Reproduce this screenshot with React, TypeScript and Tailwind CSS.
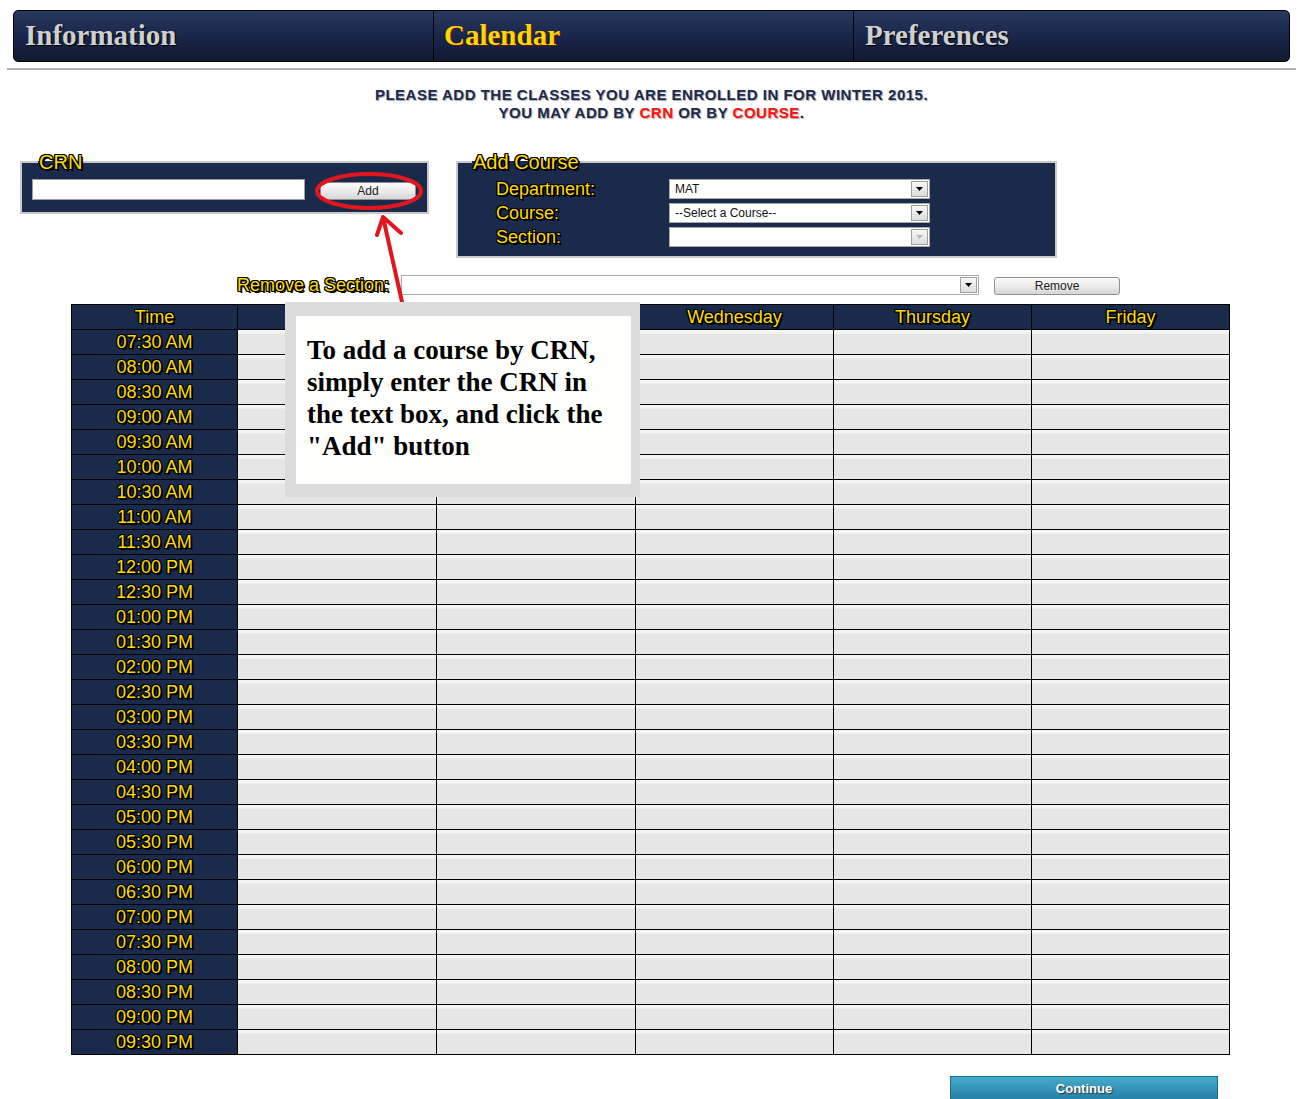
import React from "react";

const outline =
  "text-[#ffdc00] [text-shadow:-1px_-1px_0_#000,1px_-1px_0_#000,-1px_1px_0_#000,1px_1px_0_#000,-1px_0_0_#000,1px_0_0_#000,0_-1px_0_#000,0_1px_0_#000,2px_2px_0_#000]";
const arial = "font-['Liberation_Sans',Arial,sans-serif]";

const times = [
  "07:30 AM", "08:00 AM", "08:30 AM", "09:00 AM", "09:30 AM", "10:00 AM", "10:30 AM",
  "11:00 AM", "11:30 AM", "12:00 PM", "12:30 PM", "01:00 PM", "01:30 PM", "02:00 PM",
  "02:30 PM", "03:00 PM", "03:30 PM", "04:00 PM", "04:30 PM", "05:00 PM", "05:30 PM",
  "06:00 PM", "06:30 PM", "07:00 PM", "07:30 PM", "08:00 PM", "08:30 PM", "09:00 PM",
  "09:30 PM",
];
const days = ["Monday", "Tuesday", "Wednesday", "Thursday", "Friday"];

function Arrow({ disabled }: { disabled?: boolean }) {
  return (
    <div className="mr-[1px] flex h-[16px] w-[17px] items-center justify-center border border-[#a0a0a0] bg-gradient-to-b from-[#f7f7f7] to-[#dedede]">
      <svg width="7" height="4" viewBox="0 0 7 4">
        <path d="M0 0 L7 0 L3.5 4 Z" fill={disabled ? "#b8b8b8" : "#000"} />
      </svg>
    </div>
  );
}

function Select({ value, disabled, className }: { value?: string; disabled?: boolean; className: string }) {
  return (
    <div className={"flex h-[20px] items-center border border-[#a8a8a8] bg-white " + className}>
      <div className={"flex-1 pl-[5px] text-[12px] leading-[18px] text-[#111] " + arial}>{value}</div>
      <Arrow disabled={disabled} />
    </div>
  );
}

function GrayButton({ label, className }: { label: string; className: string }) {
  return (
    <div
      className={
        "flex h-[18px] items-center justify-center rounded-[3px] border border-[#8f8f8f] bg-gradient-to-b from-[#fafafa] via-[#ececec] to-[#d6d6d6] text-[12px] text-[#222] " +
        arial +
        " " +
        className
      }
    >
      {label}
    </div>
  );
}

export default function App() {
  return (
    <div className="relative min-h-[1099px] w-[1303px] overflow-hidden bg-white pt-[10px]">
      {/* Nav */}
      <div className="mx-[13px] flex h-[52px] overflow-hidden rounded-[5px] border border-black bg-gradient-to-b from-[#283a5e] via-[#18264a] to-[#111a2f]">
        <div className="flex w-[420px] items-center border-r border-black pl-[11px]">
          <span className="font-['Liberation_Serif',serif] text-[29px] font-bold text-[#cfcfcf] [text-shadow:1px_1px_1px_#000]">
            Information
          </span>
        </div>
        <div className="flex w-[420px] items-center border-r border-black pl-[10px]">
          <span className="font-['Liberation_Serif',serif] text-[29px] font-bold text-[#ffd700] [text-shadow:1px_1px_0_#6b1010]">
            Calendar
          </span>
        </div>
        <div className="flex flex-1 items-center pl-[11px]">
          <span className="font-['Liberation_Serif',serif] text-[29px] font-bold text-[#cfcfcf] [text-shadow:1px_1px_1px_#000]">
            Preferences
          </span>
        </div>
      </div>

      {/* hr */}
      <div className="mx-[7px] mt-[6px] h-[2px] bg-[#b4b4b4]" />

      {/* Heading */}
      <div
        className={
          "mt-[16px] text-center text-[15px] font-bold leading-[18px] tracking-[0.5px] text-[#1a2a50] [text-shadow:1px_1px_1px_rgba(0,0,0,0.35)] " +
          arial
        }
      >
        <div>PLEASE ADD THE CLASSES YOU ARE ENROLLED IN FOR WINTER 2015.</div>
        <div>
          YOU MAY ADD BY <span className="text-[#ff1010]">CRN</span> OR BY{" "}
          <span className="text-[#ff1010]">COURSE</span>.
        </div>
      </div>

      {/* Fieldsets */}
      <div className="mt-[30px] flex items-start pl-[20px]">
        <fieldset className="h-[62px] w-[409px] border-2 border-[#c9c9c9] bg-[#1a2a4b] px-[10px] pt-[7px]">
          <legend className={"ml-[6px] px-[1px] text-[20px] leading-[20px] " + arial + " " + outline}>CRN</legend>
          <div className="flex items-center">
            <div className="h-[21px] w-[273px] border border-[#9c9c9c] bg-white" />
            <GrayButton label="Add" className="ml-[15px] mt-[2px] w-[96px]" />
          </div>
        </fieldset>

        <fieldset className="ml-[27px] h-[106px] w-[601px] border-2 border-[#c9c9c9] bg-[#1a2a4b] pl-[38px] pt-[7px]">
          <legend className={"-ml-[24px] px-[1px] text-[20px] leading-[20px] " + arial + " " + outline}>Add Course</legend>
          <div className="flex flex-col gap-[4px]">
            <div className="flex items-center">
              <div className={"w-[173px] text-[18px] leading-[20px] " + arial + " " + outline}>Department:</div>
              <Select value="MAT" className="w-[261px]" />
            </div>
            <div className="flex items-center">
              <div className={"w-[173px] text-[18px] leading-[20px] " + arial + " " + outline}>Course:</div>
              <Select value="--Select a Course--" className="w-[261px]" />
            </div>
            <div className="flex items-center">
              <div className={"w-[173px] text-[18px] leading-[20px] " + arial + " " + outline}>Section:</div>
              <Select disabled className="w-[261px]" />
            </div>
          </div>
        </fieldset>
      </div>

      {/* Remove row */}
      <div className="mt-[17px] flex h-[20px] items-center pl-[237px]">
        <div className={"text-[18px] leading-[20px] " + arial + " " + outline}>Remove a Section:</div>
        <Select className="ml-[12px] w-[578px]" />
        <GrayButton label="Remove" className="ml-[15px] mt-[2px] w-[126px]" />
      </div>

      {/* Calendar table */}
      <div className="ml-[71px] mt-[9px] grid w-[1159px] grid-cols-[166px_199px_199px_198px_198px_198px] border-l border-t border-black">
        <div className={"flex h-[25px] items-center justify-center border-b border-r border-black bg-[#1a2a4b] text-[18px] " + arial + " " + outline}>
          Time
        </div>
        {days.map((d) => (
          <div
            key={d}
            className={"flex h-[25px] items-center justify-center border-b border-r border-black bg-[#1a2a4b] text-[18px] " + arial + " " + outline}
          >
            {d}
          </div>
        ))}
        {times.map((t) => (
          <React.Fragment key={t}>
            <div className={"flex h-[25px] items-center justify-center border-b border-r border-black bg-[#1a2a4b] text-[18px] " + arial + " " + outline}>
              {t}
            </div>
            {days.map((d) => (
              <div
                key={d}
                className="h-[25px] border-b border-r border-black bg-[linear-gradient(to_bottom,#f4f4f4_0px,#f4f4f4_3px,#e6e6e6_4px,#e6e6e6_100%)]"
              />
            ))}
          </React.Fragment>
        ))}
      </div>

      {/* Continue */}
      <div
        className={
          "ml-[950px] mt-[21px] flex h-[26px] w-[268px] items-center justify-center border border-[#1c6d8c] bg-gradient-to-b from-[#46abce] to-[#1f7ea2] text-[13px] font-bold text-white [text-shadow:1px_1px_1px_#333] " +
          arial
        }
      >
        Continue
      </div>

      {/* Annotation: ellipse + arrow */}
      <svg className="pointer-events-none absolute left-[310px] top-[168px]" width="120" height="140" viewBox="0 0 120 140">
        <ellipse cx="59" cy="23" rx="52" ry="17" fill="none" stroke="#e3161f" strokeWidth="4" />
        <path d="M92 134 L73 49 M73 49 L67 67 M73 49 L91 65" fill="none" stroke="#e3161f" strokeWidth="4" strokeLinecap="round" />
      </svg>

      {/* Tooltip */}
      <div className="absolute left-[285px] top-[302px] h-[195px] w-[355px] bg-[#dcdcdc] pb-[13px] pl-[11px] pr-[9px] pt-[14px]">
        <div className="h-full bg-[#fefefd] pl-[11px] pt-[18px] font-['Liberation_Serif',serif] text-[27px] font-bold leading-[32px] text-black whitespace-nowrap">
          To add a course by CRN,
          <br />
          simply enter the CRN in
          <br />
          the text box, and click the
          <br />
          "Add" button
        </div>
      </div>
    </div>
  );
}
